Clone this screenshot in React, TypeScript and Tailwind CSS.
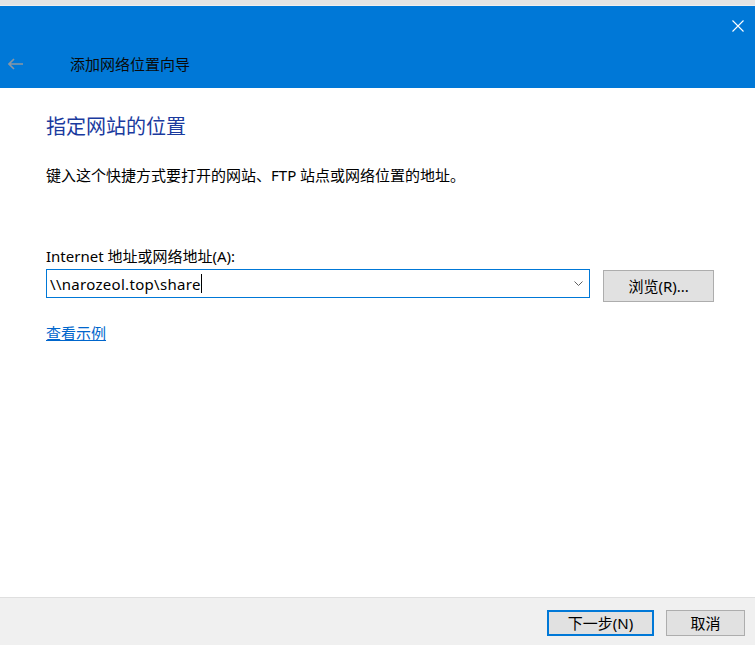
export default function App() {
  return (
    <div
      className="w-[755px] h-[645px] flex flex-col bg-white overflow-hidden text-[15px] text-black"
      style={{ fontFamily: '"Noto Sans", "Noto Sans CJK SC", sans-serif' }}
    >
      {/* window top edge */}
      <div className="h-[5px] bg-[#e4e4e4]" />
      <div className="h-[1px] bg-[#efefef]" />

      {/* wizard header */}
      <header className="h-[82px] bg-[#0078d7] flex flex-col">
        <div className="flex justify-end pt-[14px] pr-[11px]">
          <svg width="12" height="12" viewBox="0 0 12 12" fill="none" stroke="white" strokeWidth="1.1">
            <path d="M0.5 0.5L11.5 11.5M11.5 0.5L0.5 11.5" />
          </svg>
        </div>
        <div className="flex items-center h-[20px] mt-[22px]">
          <svg className="ml-[8px]" width="15" height="12" viewBox="0 0 15 12" fill="none" stroke="#8a96a3" strokeWidth="1.6">
            <path d="M6 1L1 6L6 11M1 6H15" />
          </svg>
          <span className="ml-[47px] leading-[20px] text-[#0a0a0a]">添加网络位置向导</span>
        </div>
      </header>

      {/* content */}
      <main className="flex-1 flex flex-col pl-[46px] pr-[41px]">
        <h1 className="mt-[25px] text-[20px] leading-[28px] text-[#1a3a9e] font-normal">指定网站的位置</h1>
        <p className="mt-[24px] leading-[20px]">键入这个快捷方式要打开的网站、FTP 站点或网络位置的地址。</p>

        <label className="mt-[61px] leading-[20px]">Internet 地址或网络地址(A):</label>
        <div className="mt-[3px] flex items-start gap-[13px]">
          <div className="w-[545px] h-[29px] border border-[#0078d7] flex items-center pl-[3px] pr-[6px]">
            <span className="leading-[20px] tracking-[0.3px]">\\narozeol.top\share</span>
            <span className="w-[1px] h-[19px] bg-black" />
            <div className="flex-1" />
            <svg width="9" height="5" viewBox="0 0 9 5" fill="none" stroke="#606060" strokeWidth="1">
              <path d="M0.5 0.5L4.5 4.5L8.5 0.5" />
            </svg>
          </div>
          <button className="mt-[1px] w-[111px] h-[32px] bg-[#e1e1e1] border border-[#adadad] leading-[20px]">
            浏览(R)...
          </button>
        </div>

        <a className="mt-[21px] leading-[20px] text-[#0066cc] underline w-fit">查看示例</a>
      </main>

      {/* footer */}
      <footer className="h-[48px] border-t border-[#dfdfdf] bg-[#f0f0f0] flex justify-end items-start pt-[12px] pr-[10px] gap-[12px]">
        <button className="w-[107px] h-[26px] bg-[#e1e1e1] border-2 border-[#0078d7] leading-[20px]">
          下一步(N)
        </button>
        <button className="w-[79px] h-[26px] bg-[#e1e1e1] border border-[#adadad] leading-[20px]">
          取消
        </button>
      </footer>
    </div>
  );
}
